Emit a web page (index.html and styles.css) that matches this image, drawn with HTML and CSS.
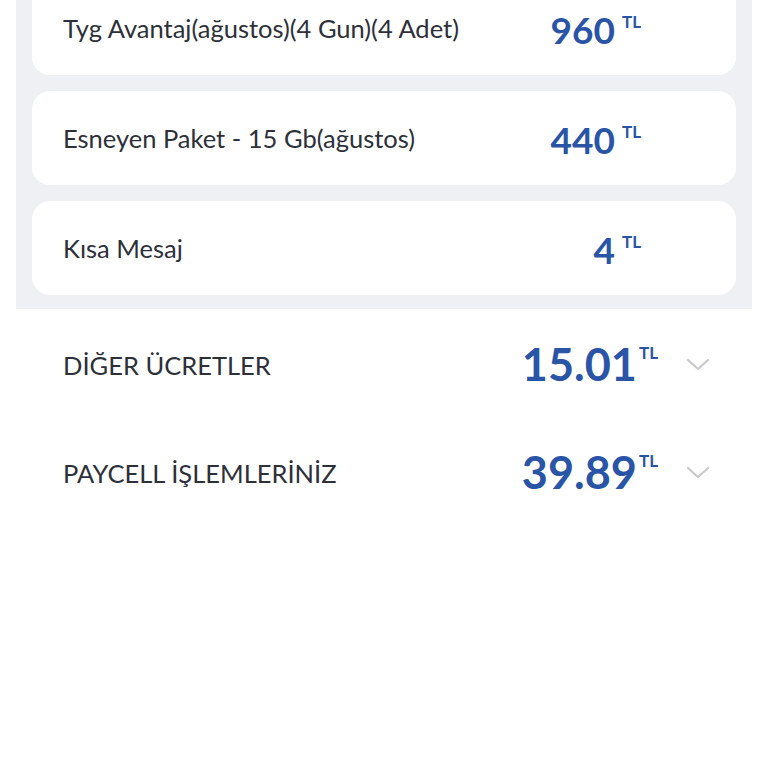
FILE: index.html
```html
<!DOCTYPE html>
<html lang="tr">
<head>
  <meta charset="UTF-8">
  <title>Fatura Detayı</title>
  <link rel="stylesheet" href="styles.css">
</head>
<body>
  <div class="packages">
    <div class="card">
      <span class="label">Tyg Avantaj(ağustos)(4 Gun)(4 Adet)</span>
      <span class="price">960<sup>TL</sup></span>
    </div>
    <div class="card">
      <span class="label">Esneyen Paket - 15 Gb(ağustos)</span>
      <span class="price">440<sup>TL</sup></span>
    </div>
    <div class="card">
      <span class="label">Kısa Mesaj</span>
      <span class="price">4<sup>TL</sup></span>
    </div>
  </div>

  <div class="summary">
    <div class="row">
      <span class="title">DİĞER ÜCRETLER</span>
      <span class="total">15.01<sup>TL</sup></span>
      <svg class="chevron" width="24" height="14" viewBox="0 0 24 14">
        <path d="M2 2 L12 11 L22 2" fill="none" stroke="#c7c9cd" stroke-width="2.2" stroke-linecap="round" stroke-linejoin="round"/>
      </svg>
    </div>
    <div class="row">
      <span class="title">PAYCELL İŞLEMLERİNİZ</span>
      <span class="total">39.89<sup>TL</sup></span>
      <svg class="chevron" width="24" height="14" viewBox="0 0 24 14">
        <path d="M2 2 L12 11 L22 2" fill="none" stroke="#c7c9cd" stroke-width="2.2" stroke-linecap="round" stroke-linejoin="round"/>
      </svg>
    </div>
  </div>
</body>
</html>
```

FILE: styles.css
```css
body {
  margin: 0;
  font-family: Lato, "Open Sans", sans-serif;
  background-color: #fff;
  color: #2d3039;
}

.packages {
  margin: -35px 16px 0;
  padding: 16px 16px 14px;
  background-color: #eef0f3;
  display: flex;
  flex-direction: column;
  gap: 16px;
}

.card {
  height: 94px;
  padding: 0 95px 0 31px;
  background-color: #fff;
  border-radius: 18px;
  display: flex;
  align-items: center;
  justify-content: space-between;
}

.label {
  font-size: 25.5px;
}

.price, .total {
  display: flex;
  align-items: flex-start;
  font-weight: bold;
  color: #2a55a7;
  line-height: 1;
}

.price {
  font-size: 37px;
  margin-top: 2px;
}

.price sup, .total sup {
  font-size: 17px;
  margin-left: 7px;
  margin-top: 2px;
}

.total sup {
  margin-left: 2px;
}

.summary {
  padding-top: 2px;
}

.row {
  height: 108px;
  padding: 0 58px 0 63px;
  display: flex;
  align-items: center;
}

.title {
  flex: 1;
  font-size: 25.5px;
}

.total {
  font-size: 45px;
  margin-top: -2px;
}

.chevron {
  margin-left: 28px;
}
```
